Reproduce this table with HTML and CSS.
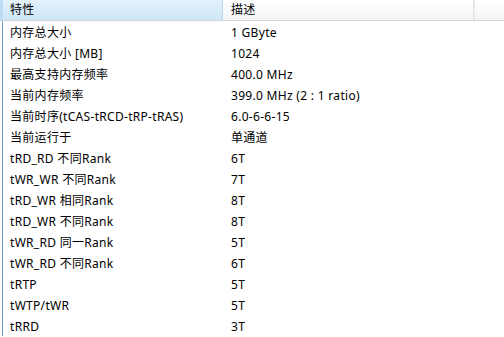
FILE: index.html
```html
<!DOCTYPE html>
<html>
<head>
<meta charset="utf-8">
<link rel="stylesheet" href="styles.css">
</head>
<body>
<div class="list">
  <div class="head">
    <div class="hcell sorted">特性</div>
    <div class="hcell">描述</div>
    <div class="hcell rest"></div>
  </div>
  <div class="rows">
    <div class="row"><span class="c1">内存总大小</span><span class="c2">1 GByte</span></div>
    <div class="row"><span class="c1">内存总大小 [MB]</span><span class="c2">1024</span></div>
    <div class="row"><span class="c1">最高支持内存频率</span><span class="c2">400.0 MHz</span></div>
    <div class="row"><span class="c1">当前内存频率</span><span class="c2">399.0 MHz (2 : 1 ratio)</span></div>
    <div class="row"><span class="c1">当前时序(tCAS-tRCD-tRP-tRAS)</span><span class="c2">6.0-6-6-15</span></div>
    <div class="row"><span class="c1">当前运行于</span><span class="c2">单通道</span></div>
    <div class="row"><span class="c1">tRD_RD 不同Rank</span><span class="c2">6T</span></div>
    <div class="row"><span class="c1">tWR_WR 不同Rank</span><span class="c2">7T</span></div>
    <div class="row"><span class="c1">tRD_WR 相同Rank</span><span class="c2">8T</span></div>
    <div class="row"><span class="c1">tRD_WR 不同Rank</span><span class="c2">8T</span></div>
    <div class="row"><span class="c1">tWR_RD 同一Rank</span><span class="c2">5T</span></div>
    <div class="row"><span class="c1">tWR_RD 不同Rank</span><span class="c2">6T</span></div>
    <div class="row"><span class="c1">tRTP</span><span class="c2">5T</span></div>
    <div class="row"><span class="c1">tWTP/tWR</span><span class="c2">5T</span></div>
    <div class="row"><span class="c1">tRRD</span><span class="c2">3T</span></div>
  </div>
</div>
</body>
</html>
```
FILE: styles.css
```css
html, body {
  margin: 0;
  padding: 0;
  background: #ffffff;
}
body {
  font-family: "Noto Sans", "Noto Sans CJK SC", sans-serif;
  font-size: 12px;
  letter-spacing: 0.3px;
  color: #000;
  overflow: hidden;
  width: 504px;
  height: 337px;
}
.list {
  display: flex;
  flex-direction: column;
}
.head {
  display: flex;
  height: 20px;
  border-bottom: 1px solid #d5d5d5;
  background: linear-gradient(#ffffff, #f3f4f6);
}
.hcell {
  box-sizing: border-box;
  width: 251px;
  padding-left: 8px;
  line-height: 20px;
  border-right: 1px solid #e3e4e6;
}
.hcell.sorted {
  width: 223px;
  background: linear-gradient(#e4f2fc, #cde6f7);
  border-left: 3px solid #bcdcf4;
  padding-left: 7px;
  border-right: 1px solid #c0d9ee;
}
.hcell.rest {
  flex: 1;
  border-right: none;
  border-left: 1px solid #e9eaec;
}
.rows {
  border-left: 1px solid #6f9bd1;
  margin-left: 2px;
}
.row {
  display: flex;
  height: 21px;
  line-height: 21px;
  padding-top: 1px;
  box-sizing: border-box;
}
.c1 {
  width: 220px;
  padding-left: 7px;
  box-sizing: border-box;
}
.c2 {
  padding-left: 8px;
}
```
